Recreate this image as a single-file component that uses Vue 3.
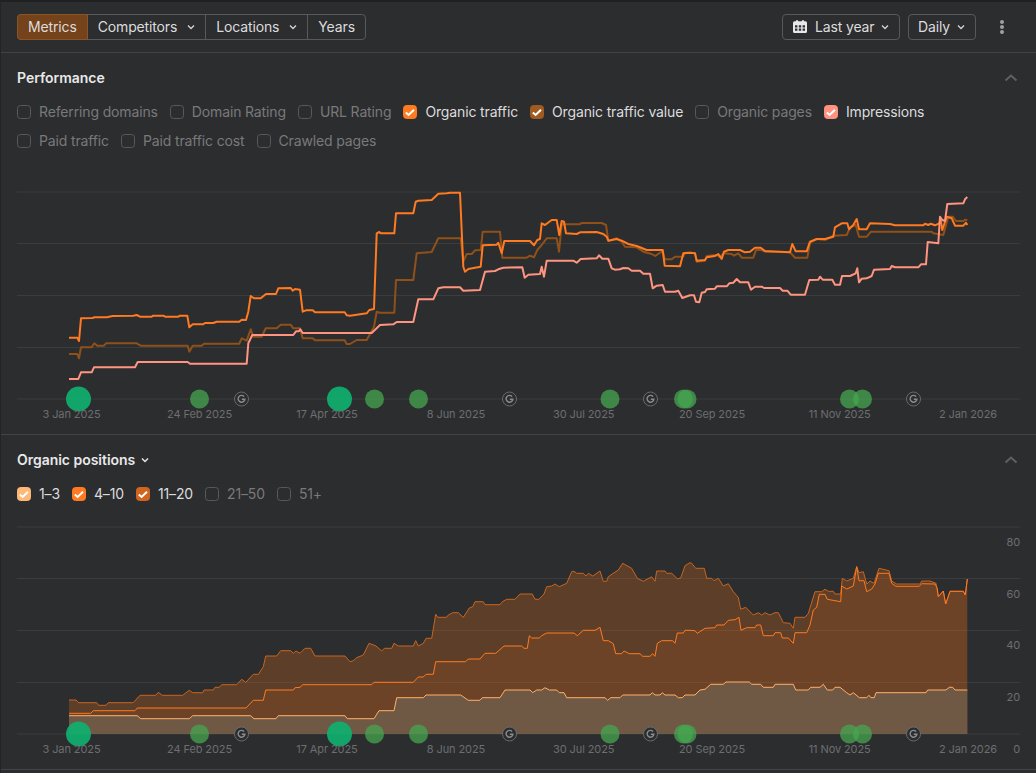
<script setup>
const C3 = [0, 170]
const C4 = [350, 170]
const C5 = [690, 170]
const C6 = [0, 430]
const C7 = [350, 510]
const C8 = [690, 510]

function toPts(parts) {
  const out = []
  for (const [origin, flat] of parts) {
    for (let i = 0; i < flat.length; i += 2) {
      out.push([origin[0] + flat[i] / 3, origin[1] + flat[i + 1] / 3])
    }
  }
  return out
}
const line = (pts) => 'M' + pts.map((p) => p[0].toFixed(1) + ' ' + p[1].toFixed(1)).join('L')
const area = (pts, base) => line(pts) + `L${pts[pts.length - 1][0].toFixed(1)} ${base}L${pts[0][0].toFixed(1)} ${base}Z`

const traffic = toPts([
  [C3, [207,503,232,503,237,513,243,445,278,444,282,442,320,442,338,438,400,437,410,435,420,440,455,440,460,437,490,437,495,440,535,440,540,437,562,437,568,472,578,463,610,463,615,459,640,459,650,455,718,455,725,449,738,450,745,425,752,378,762,385,782,385,798,372,828,372,835,355,872,354,878,362,885,357,900,359,908,425,918,421,938,421,945,427,1034,427,1040,436]],
  [C4, [0,437,50,430,58,420,72,417,80,190,88,186,92,190,133,190,138,130,190,130,197,95,205,92,245,90,265,71,290,70,300,68,330,68,340,290,345,305,355,297,375,293,392,290,398,226,440,224,445,218,455,250,463,213,540,213,552,226,562,210,570,207,575,160,585,165,605,150,620,150,628,195,635,153,642,155,648,190,680,192,690,187,740,186,760,192,770,200,775,212,800,207,815,212,835,222,860,228,890,240,938,240,944,287,990,289,1000,250,1020,248]],
  [C5, [15,250,20,272,45,270,50,262,75,258,85,252,95,267,102,245,115,240,150,240,165,247,180,245,195,233,212,233,225,243,300,247,307,222,317,244,350,244,360,215,380,207,405,207,430,200,435,172,455,160,472,160,477,178,490,165,500,147,507,178,530,178,540,160,600,162,615,166,700,166,705,161,715,165,722,161,735,166,748,160,752,150,757,180,770,140,785,145,795,167,820,167,828,158,832,165]]
])
const value = toPts([
  [C3, [207,552,232,552,237,565,243,532,275,532,283,520,292,527,312,527,318,520,410,520,422,527,563,527,568,545,578,527,605,527,612,521,718,521,725,505,740,512,752,478,760,500,785,500,797,475,830,475,842,464,872,464,880,475,900,475,908,505,938,505,945,511,1034,511,1040,522]],
  [C4, [0,522,20,510,50,510,72,470,80,425,90,428,133,428,138,330,190,330,200,250,245,246,265,205,332,205,340,275,350,252,365,252,375,241,392,240,398,185,450,185,457,263,530,263,540,257,552,262,562,240,575,225,590,205,620,205,627,245,635,163,688,163,695,159,755,159,768,165,775,212,800,205,815,215,825,230,860,232,880,245,905,252,915,258,938,243,944,268,965,268,975,260,1000,260,1005,248,1020,248]],
  [C5, [15,250,20,275,45,272,50,258,80,255,90,262,100,250,125,252,132,257,145,250,155,263,190,263,198,240,215,240,225,245,300,247,315,263,352,263,360,218,380,207,405,210,430,197,470,195,480,172,497,165,507,200,530,200,543,185,725,185,730,190,760,195,775,140,788,140,798,153,820,153,826,149,832,150]]
])
const impressions = toPts([
  [C3, [207,627,235,627,243,607,275,607,282,592,405,592,413,576,563,576,570,581,740,581,745,520,757,495,880,495,888,484,897,484,901,478,908,489,1050,489]],
  [C4, [65,489,90,465,130,463,140,456,190,456,205,388,250,388,265,355,280,352,330,352,340,362,390,360,405,305,435,303,445,298,460,293,517,292,524,323,535,314,570,312,575,290,582,320,590,272,670,272,680,278,692,267,740,265,747,256,757,266,775,266,785,295,795,299,810,298,820,294,835,295,845,302,870,302,880,311,900,311,908,355,920,347,938,345,945,365,975,365,985,362,997,384,1020,376]],
  [C5, [12,376,18,395,28,397,35,368,45,366,50,358,75,356,80,349,110,349,118,340,130,338,140,327,150,337,175,337,183,359,195,350,215,350,222,354,270,354,278,362,292,362,302,374,345,374,358,330,385,329,390,320,398,329,427,329,435,344,450,344,456,318,480,318,497,310,502,295,507,337,515,326,530,325,545,318,552,299,600,297,605,288,615,292,685,292,693,283,708,283,713,216,745,220,750,140,757,150,765,153,772,102,820,100,825,88,832,81]]
])
const top20 = toPts([
  [C6, [207,810,228,810,236,818,290,818,296,826,318,826,325,818,400,818,420,796,467,796,475,787,487,796,548,796,568,781,578,788,608,788,612,780,640,780,645,772,658,772,665,764,710,764,725,748,737,757,760,733,775,733,790,710,797,678,830,678,842,662,872,662,880,670,888,663,900,670,915,655,932,655,945,678,1035,678]],
  [C7, [0,455,10,452,20,443,40,435,57,400,78,408,95,423,103,415,125,415,132,400,145,408,190,408,197,392,205,408,220,400,228,385,245,385,257,313,263,322,290,322,295,315,308,308,325,308,340,322,358,294,368,290,375,275,400,275,405,284,450,284,457,275,470,268,495,268,510,252,547,252,555,268,567,268,582,252,590,230,605,228,615,222,628,230,650,220,665,185,672,184,680,190,700,190,708,198,715,190,728,198,750,183,760,214,770,214,775,200,790,190,805,180,818,160,845,175,862,205,880,214,905,200,915,214,920,183,945,183,950,190,965,190,982,206,992,204,1005,167,1020,158]],
  [C8, [5,160,17,175,43,175,50,205,65,205,72,212,85,205,100,228,115,221,130,245,145,262,152,298,167,292,190,315,205,308,215,315,225,308,240,315,255,308,265,308,280,338,300,340,310,355,315,322,345,322,355,310,375,245,395,245,405,238,415,244,430,244,435,252,452,252,457,205,470,213,490,205,500,170,507,188,520,185,530,222,540,213,552,220,567,175,597,182,605,213,620,222,690,222,695,213,720,213,738,220,745,260,760,243,767,282,780,244,820,244,826,255,832,207]]
])
const mid10 = toPts([
  [C6, [207,850,272,850,280,842,405,842,412,834,738,834,760,811,790,811,797,780,880,780,885,773,900,772,908,764,1050,764]],
  [C7, [65,524,72,517,190,517,205,501,220,501,228,493,250,493,257,455,347,455,355,447,390,447,405,430,437,430,445,423,462,408,515,408,522,415,532,415,538,377,545,384,568,384,575,377,590,369,672,369,682,377,700,361,735,361,750,352,760,392,775,392,790,401,797,431,815,431,822,423,838,431,870,431,878,439,900,439,908,431,915,439,922,400,935,392,968,392,975,400,982,369,1000,369,1005,361,1020,361]],
  [C8, [15,362,22,370,45,355,75,353,80,345,102,345,115,331,135,329,147,322,153,361,170,353,195,353,200,345,212,345,220,377,250,377,255,368,272,368,277,384,295,384,310,400,315,368,350,368,360,345,370,300,380,292,388,253,405,253,412,268,452,275,455,228,470,237,490,228,500,170,507,212,522,212,530,245,545,237,555,222,565,190,597,190,605,220,618,229,688,229,695,221,735,222,742,235,745,260,760,243,767,282,780,244,820,244,826,255,832,207]]
])
const low3 = toPts([
  [C6, [207,857,412,857,422,866,568,866,578,857,752,857,762,866,828,866,835,857,1035,857,1042,866]],
  [C7, [0,626,72,626,87,602,132,602,140,563,220,563,228,555,332,555,355,571,390,571,397,563,450,563,465,540,540,540,548,548,560,540,575,540,585,533,598,540,620,540,628,548,642,548,650,563,765,563,773,571,782,563,810,563,818,555,900,555,907,548,915,555,930,555,937,548,945,555,975,555,985,563,997,563,1005,555,1020,555]],
  [C8, [15,555,30,540,45,538,62,523,100,523,108,516,178,516,185,523,212,523,220,532,250,532,255,523,310,523,317,540,355,540,362,532,390,532,400,523,412,540,428,540,435,532,450,532,470,548,480,555,490,548,508,563,530,563,537,556,543,563,553,563,558,548,708,548,713,540,768,540,778,532,788,532,795,540,832,540]]
])

const paths = {
  traffic: line(traffic),
  value: line(value),
  impressions: line(impressions),
  top: line(top20),
  topFill: area(top20, 734),
  mid: line(mid10),
  midFill: area(mid10, 734),
  low: line(low3),
  lowFill: area(low3, 734)
}

const perfRows = [
  [
    { t: 'Referring domains' }, { t: 'Domain Rating' }, { t: 'URL Rating' },
    { t: 'Organic traffic', c: 'c-orange' }, { t: 'Organic traffic value', c: 'c-brown' },
    { t: 'Organic pages' }, { t: 'Impressions', c: 'c-pink' }
  ],
  [{ t: 'Paid traffic' }, { t: 'Paid traffic cost' }, { t: 'Crawled pages' }]
]
const posRow = [
  { t: '1–3', c: 'c-peach' }, { t: '4–10', c: 'c-orange' }, { t: '11–20', c: 'c-rust' },
  { t: '21–50' }, { t: '51+' }
]
const dates = [
  ['3 Jan 2025', 71.5], ['24 Feb 2025', 199.5], ['17 Apr 2025', 327], ['8 Jun 2025', 456],
  ['30 Jul 2025', 583.7], ['20 Sep 2025', 712], ['11 Nov 2025', 839.7], ['2 Jan 2026', 968]
]
const bigDots = [78.5, 339.5]
const midDots = [199.5, 374.5, 418.5, 610, 683.5, 687, 849.5, 862.5]
const gIcons = [241.5, 509.5, 650.5, 913.5]
const grid1 = [192, 243.5, 295.5, 347.5, 399]
const grid2 = [527, 578.5, 630.5, 682.5, 734]
const yLabels = [['80', 542], ['60', 594], ['40', 645], ['20', 697], ['0', 749]]
</script>

<template>
  <div class="page">
    <header class="toolbar">
      <div class="group">
        <button class="seg active">Metrics</button>
        <button class="seg drop">Competitors
          <svg class="chev" viewBox="0 0 10 10"><path d="M2 3.5 5 6.5 8 3.5" /></svg>
        </button>
        <button class="seg drop">Locations
          <svg class="chev" viewBox="0 0 10 10"><path d="M2 3.5 5 6.5 8 3.5" /></svg>
        </button>
        <button class="seg">Years</button>
      </div>
      <div class="spacer"></div>
      <button class="btn range">
        <svg class="cal" viewBox="0 0 16 16">
          <path fill-rule="evenodd" d="M4 1.300h2v1h4v-1h2v1h1.500A1.500 1.500 0 0 1 15 3.800V12.500A1.500 1.500 0 0 1 13.500 14H2.500A1.500 1.500 0 0 1 1 12.500V3.800A1.500 1.500 0 0 1 2.500 2.300H4V1.300ZM3 6.300V8.400H5.400V6.300ZM6.800 6.300V8.400H9.200V6.300ZM10.600 6.300V8.400H13V6.300ZM3 9.600V11.700H5.400V9.600ZM6.800 9.600V11.700H9.200V9.600ZM10.600 9.600V11.700H13V9.600Z" />
        </svg>
        Last year
        <svg class="chev" viewBox="0 0 10 10"><path d="M2 3.5 5 6.5 8 3.5" /></svg>
      </button>
      <button class="btn daily">Daily
        <svg class="chev" viewBox="0 0 10 10"><path d="M2 3.5 5 6.5 8 3.5" /></svg>
      </button>
      <div class="dots"><i></i><i></i><i></i></div>
    </header>

    <section class="panel">
      <div class="panel-head">
        <h2>Performance</h2>
        <svg class="collapse" viewBox="0 0 14 10"><path d="M1.500 7.500 7 2.500 12.500 7.500" /></svg>
      </div>
      <div class="legend">
        <div v-for="(row, i) in perfRows" :key="i" class="legend-row">
          <label v-for="item in row" :key="item.t" class="check" :class="{ on: item.c }">
            <span class="box" :class="item.c">
              <svg v-if="item.c" viewBox="0 0 14 14"><path d="M2.800 7.500 5.600 10 11 4.800" /></svg>
            </span>
            {{ item.t }}
          </label>
        </div>
      </div>
      <svg class="chart chart-a" viewBox="0 160 1036 274">
        <line v-for="y in grid1" :key="y" class="grid" x1="17" x2="1020" :y1="y" :y2="y" />
        <path class="ln value" :d="paths.value" />
        <path class="ln traffic" :d="paths.traffic" />
        <path class="ln imp" :d="paths.impressions" />
        <circle v-for="x in midDots" :key="x" class="dot-mid" :cx="x" cy="399" r="9.500" />
        <circle v-for="x in bigDots" :key="x" class="dot-big" :cx="x" cy="399" r="12.500" />
        <g v-for="x in gIcons" :key="x" :transform="`translate(${x} 399)`">
          <circle class="g-ring" r="7" />
          <path class="g-mark" d="M2.600 -2.400A3.400 3.400 0 1 0 3.400 0.200H0.300" />
        </g>
        <text v-for="d in dates" :key="d[0]" class="tick" :x="d[1]" y="418" text-anchor="middle">{{ d[0] }}</text>
      </svg>
    </section>

    <section class="panel second">
      <div class="panel-head">
        <h2 class="with-chev">Organic positions
          <svg class="chev strong" viewBox="0 0 10 10"><path d="M2 3.500 5 6.500 8 3.500" /></svg>
        </h2>
        <svg class="collapse" viewBox="0 0 14 10"><path d="M1.500 7.500 7 2.500 12.500 7.500" /></svg>
      </div>
      <div class="legend">
        <div class="legend-row">
          <label v-for="item in posRow" :key="item.t" class="check" :class="{ on: item.c }">
            <span class="box" :class="item.c">
              <svg v-if="item.c" viewBox="0 0 14 14"><path d="M2.800 7.500 5.600 10 11 4.800" /></svg>
            </span>
            {{ item.t }}
          </label>
        </div>
      </div>
      <svg class="chart chart-b" viewBox="0 510 1036 259">
        <line v-for="y in grid2" :key="y" class="grid" x1="17" x2="1020" :y1="y" :y2="y" />
        <path class="fill-top" :d="paths.topFill" />
        <path class="fill-mid" :d="paths.midFill" />
        <path class="fill-low" :d="paths.lowFill" />
        <path class="thin top" :d="paths.top" />
        <path class="thin mid" :d="paths.mid" />
        <path class="thin low" :d="paths.low" />
        <circle v-for="x in midDots" :key="x" class="dot-mid" :cx="x" cy="734" r="9.500" />
        <circle v-for="x in bigDots" :key="x" class="dot-big" :cx="x" cy="734" r="12.500" />
        <g v-for="x in gIcons" :key="x" :transform="`translate(${x} 734)`">
          <circle class="g-ring solid" r="7" />
          <path class="g-mark" d="M2.600 -2.400A3.400 3.400 0 1 0 3.400 0.200H0.300" />
        </g>
        <text v-for="d in dates" :key="d[0]" class="tick" :x="d[1]" y="753" text-anchor="middle">{{ d[0] }}</text>
        <text v-for="l in yLabels" :key="l[0]" class="tick" x="1020" :y="l[1] + 4" text-anchor="end">{{ l[0] }}</text>
      </svg>
    </section>
  </div>
</template>

<style>
html, body { background: #2c2d2f; }
</style>

<style scoped>
.page {
  width: 1036px;
  height: 773px;
  box-sizing: border-box;
  background: #2c2d2f;
  border-top: 2px solid #1f2022;
  border-left: 1px solid #232426;
  font-family: Inter, "Liberation Sans", sans-serif;
  font-size: 14px;
  letter-spacing: -0.14px;
  color: #dcdcdd;
  overflow: hidden;
}
.toolbar {
  height: 51px;
  box-sizing: border-box;
  display: flex;
  align-items: center;
  padding: 0 32px 1px 16px;
  border-bottom: 1px solid #424345;
}
.spacer { flex: 1; }
.group {
  display: flex;
  height: 26px;
  border: 1px solid #58595c;
  border-radius: 4px;
  box-sizing: border-box;
}
button {
  font: inherit;
  letter-spacing: inherit;
  color: inherit;
  background: none;
  border: 0;
  padding: 0;
  display: flex;
  align-items: center;
  justify-content: center;
}
.seg {
  padding: 0 10px;
  border-right: 1px solid #58595c;
}
.seg.drop { gap: 9px; padding: 0 9px 0 10px; }
.seg:last-child { border-right: 0; }
.seg.active {
  background: #74421b;
  margin: -1px 0 -1px -1px;
  border: 1px solid #8a5526;
  border-radius: 4px 0 0 4px;
}
.chev {
  width: 10px;
  height: 10px;
  fill: none;
  stroke: #d5d5d6;
  stroke-width: 1.300;
}
.chev.strong { stroke: #e6e6e7; stroke-width: 1.500; }
.btn {
  height: 26px;
  box-sizing: border-box;
  border: 1px solid #58595c;
  border-radius: 4px;
  gap: 6px;
}
.range { width: 118px; margin-right: 8px; justify-content: flex-start; padding-left: 9px; }
.daily { width: 68px; }
.cal { width: 16px; height: 16px; fill: #e8e8e9; margin-right: 1px; }
.dots {
  width: 4px;
  margin-left: 24px;
  display: flex;
  flex-direction: column;
  gap: 1px;
}
.dots i { width: 4px; height: 4px; border-radius: 50%; background: #a0a0a2; }
.panel {
  height: 382px;
  box-sizing: border-box;
  padding-top: 15px;
  border-bottom: 1px solid #424345;
}
.panel.second { height: 335px; }
.panel-head {
  height: 20px;
  display: flex;
  justify-content: space-between;
  align-items: center;
  padding: 0 18px 0 16px;
}
h2 {
  margin: 0;
  font-size: 14px;
  font-weight: 600;
  line-height: 20px;
  letter-spacing: -0.03px;
  color: #e8e8e9;
}
.with-chev { display: flex; align-items: center; gap: 5px; }
.collapse {
  width: 14px;
  height: 10px;
  fill: none;
  stroke: #5f6062;
  stroke-width: 2;
}
.legend {
  margin-top: 14px;
  padding-left: 16px;
  display: flex;
  flex-direction: column;
  gap: 9px;
}
.legend-row { display: flex; gap: 12px; height: 20px; }
.check {
  display: flex;
  align-items: center;
  gap: 8px;
  line-height: 20px;
  color: #79797b;
  white-space: nowrap;
}
.check.on { color: #dcdcdd; }
.box {
  width: 14px;
  height: 14px;
  box-sizing: border-box;
  border: 1px solid #58595c;
  border-radius: 3.500px;
  position: relative;
  flex: none;
}
.box svg {
  position: absolute;
  left: -1px;
  top: -1px;
  width: 14px;
  height: 14px;
  fill: none;
  stroke: #fff;
  stroke-width: 2;
}
.c-orange { background: #ff7a20; border-color: #ff7a20; }
.c-brown { background: #a15a20; border-color: #a15a20; }
.c-pink { background: #ff9280; border-color: #ff9280; }
.c-peach { background: #ffb876; border-color: #ffb876; }
.c-rust { background: #cf651f; border-color: #cf651f; }
.chart { display: block; width: 1036px; margin-left: -1px; }
.chart-a { height: 274px; margin-top: 9px; }
.chart-b { height: 259px; margin-top: 6px; }
.grid { stroke: #3b3c3e; stroke-width: 1; }
.ln { fill: none; stroke-width: 2; stroke-linejoin: round; }
.ln.value { stroke: #8f5119; }
.ln.traffic { stroke: #ff7a20; }
.ln.imp { stroke: #ff9480; }
.thin { fill: none; stroke-width: 1; stroke-linejoin: round; }
.thin.top { stroke: #c8651f; }
.thin.mid { stroke: #ff7a20; }
.thin.low { stroke: #ffb06a; }
.fill-top { fill: #c8651f; fill-opacity: .32; }
.fill-mid { fill: #ff7a20; fill-opacity: .1; }
.fill-low { fill: #6f5b47; fill-opacity: .96; }
.dot-big { fill: #0fb070; fill-opacity: .92; }
.dot-mid { fill: #45a550; fill-opacity: .75; }
.g-ring { fill: #2c2d2f; stroke: #6a6b6d; stroke-width: 1; }
.g-mark { fill: none; stroke: #8b8c8e; stroke-width: 1.400; }
.tick {
  font-family: Inter, "Liberation Sans", sans-serif;
  font-size: 11px;
  letter-spacing: -0.1px;
  fill: #6d6e70;
}
</style>
